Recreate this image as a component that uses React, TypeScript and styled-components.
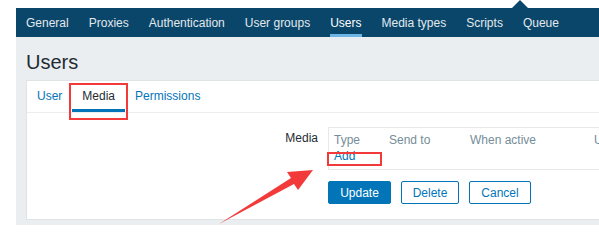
import styled, { createGlobalStyle } from "styled-components";

const GlobalStyle = createGlobalStyle`
  html, body {
    margin: 0;
    padding: 0;
    background: #ffffff;
    overflow: hidden;
  }
  body {
    font-family: "Liberation Sans", Arial, sans-serif;
    font-size: 12px;
    color: #1f2c33;
  }
`;

const Page = styled.div`
  position: relative;
  width: 760px;
  height: 244px;
  padding: 8px 0 0 16px;
  box-sizing: border-box;
`;

const Shell = styled.div`
  background: #ebeef0;
  padding-bottom: 5px;
`;

const NavBar = styled.nav`
  position: relative;
  display: flex;
  height: 29px;
  background: #0a466a;

  &::before {
    content: "";
    position: absolute;
    left: 496px;
    bottom: 100%;
    border-left: 8px solid transparent;
    border-right: 8px solid transparent;
    border-bottom: 8px solid #0a466a;
  }
`;

const NavItem = styled.div<{ $active?: boolean }>`
  display: flex;
  align-items: center;
  margin: 0 10px;
  padding-top: 3px;
  box-sizing: border-box;
  border-bottom: 3px solid ${(p) => (p.$active ? "#6eb5e6" : "transparent")};
  color: ${(p) => (p.$active ? "#ffffff" : "#e3e9ee")};
  white-space: nowrap;
`;

const Title = styled.h1`
  margin: 0;
  padding: 13px 10px 6px;
  font-size: 20px;
  line-height: 24px;
  font-weight: normal;
  color: #1f2c33;
`;

const Panel = styled.div`
  margin-left: 10px;
  background: #ffffff;
  border: 1px solid #dfe4e7;
  padding-bottom: 15px;
`;

const Tabs = styled.div`
  display: flex;
  height: 31px;
  border-bottom: 1px solid #ebeef0;
`;

const Tab = styled.div<{ $active?: boolean }>`
  display: flex;
  align-items: center;
  padding: 2px 10px 0;
  box-sizing: border-box;
  border-bottom: 3px solid ${(p) => (p.$active ? "#0275b8" : "transparent")};
  color: ${(p) => (p.$active ? "#1f2c33" : "#0275b8")};
`;

const FormRow = styled.div`
  display: flex;
  gap: 10px;
  padding-top: 14px;
`;

const Label = styled.div`
  width: 291px;
  flex: none;
  text-align: right;
  padding-top: 3px;
  line-height: 16px;
`;

const MediaTable = styled.div`
  width: 420px;
  flex: none;
  border: 1px solid #e6e9eb;
  padding: 4px 5px 5px;
  line-height: 16px;
`;

const HeadRow = styled.div`
  display: flex;
  color: #768d99;
  white-space: nowrap;
`;

const HeadCell = styled.div<{ $w: number }>`
  width: ${(p) => p.$w}px;
  flex: none;
`;

const Link = styled.div`
  color: #0275b8;
`;

const Buttons = styled.div`
  display: flex;
  gap: 10px;
  margin: 11px 0 0 301px;
`;

const Button = styled.button<{ $primary?: boolean; $w: number }>`
  height: 23px;
  padding: 0;
  width: ${(p) => p.$w}px;
  border-radius: 2px;
  border: 1px solid #0275b8;
  background: ${(p) => (p.$primary ? "#0275b8" : "#ffffff")};
  color: ${(p) => (p.$primary ? "#ffffff" : "#0275b8")};
  font-family: "Liberation Sans", Arial, sans-serif;
  font-size: 12px;
`;

const Marker = styled.div<{ $x: number; $y: number; $w: number; $h: number }>`
  position: absolute;
  left: ${(p) => p.$x}px;
  top: ${(p) => p.$y}px;
  width: ${(p) => p.$w}px;
  height: ${(p) => p.$h}px;
  border: 2px solid #f23a3a;
  box-sizing: border-box;
`;

const ArrowLayer = styled.svg`
  position: absolute;
  left: 0;
  top: 0;
`;

const navItems = [
  "General",
  "Proxies",
  "Authentication",
  "User groups",
  "Users",
  "Media types",
  "Scripts",
  "Queue",
];

export default function App() {
  return (
    <Page>
      <GlobalStyle />
      <Shell>
        <NavBar>
          {navItems.map((item) => (
            <NavItem key={item} $active={item === "Users"}>
              {item}
            </NavItem>
          ))}
        </NavBar>
        <Title>Users</Title>
        <Panel>
          <Tabs>
            <Tab>User</Tab>
            <Tab $active>Media</Tab>
            <Tab>Permissions</Tab>
          </Tabs>
          <FormRow>
            <Label>Media</Label>
            <MediaTable>
              <HeadRow>
                <HeadCell $w={55}>Type</HeadCell>
                <HeadCell $w={81}>Send to</HeadCell>
                <HeadCell $w={124}>When active</HeadCell>
                <HeadCell $w={120}>Use if severity</HeadCell>
              </HeadRow>
              <Link>Add</Link>
            </MediaTable>
          </FormRow>
          <Buttons>
            <Button $primary $w={63}>Update</Button>
            <Button $w={58}>Delete</Button>
            <Button $w={62}>Cancel</Button>
          </Buttons>
        </Panel>
      </Shell>
      <Marker $x={69} $y={83} $w={59} $h={37} />
      <Marker $x={327} $y={152} $w={55} $h={14} />
      <ArrowLayer width="599" height="244" viewBox="0 0 599 244">
        <polygon
          points="219,224 291,178 287,172 313,170 298,190 294,184"
          fill="#f23a3a"
        />
      </ArrowLayer>
    </Page>
  );
}
